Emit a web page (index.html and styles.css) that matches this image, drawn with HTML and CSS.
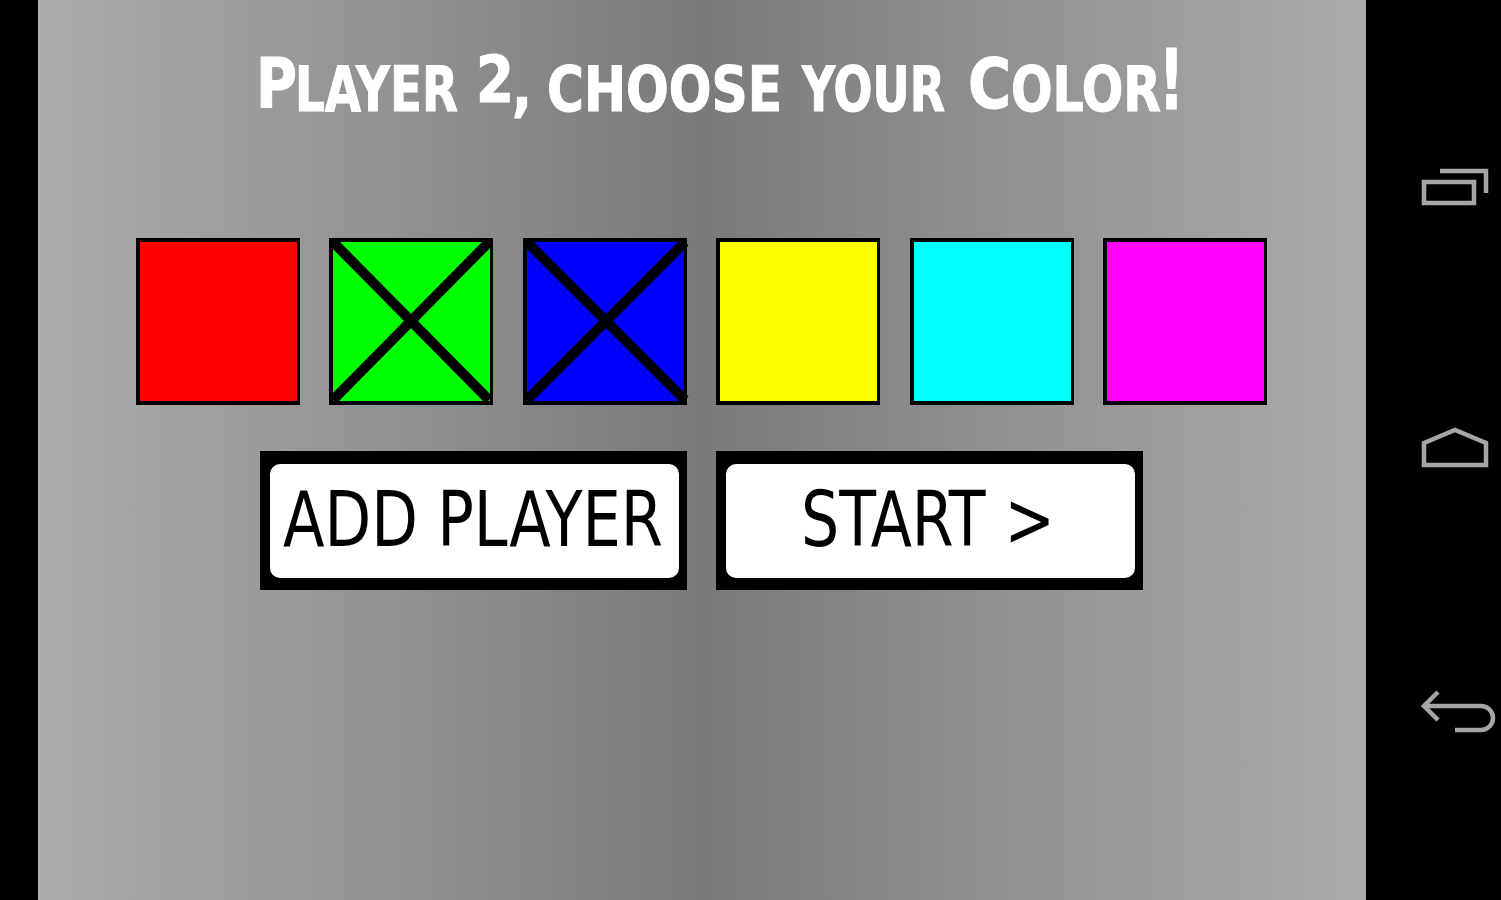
FILE: index.html
```
<!DOCTYPE html>
<html lang="en">
<head>
    <meta charset="UTF-8">
    <meta name="viewport" content="width=device-width, initial-scale=1.0">
    <title>Choose your Color</title>
    <link rel="stylesheet" href="styles.css">
</head>
<body>
    <main class="game">
        <h1 class="title">
            <svg width="920" height="90" viewBox="260 40 920 90">
                <text class="cap" x="256" y="108" textLength="41" lengthAdjust="spacingAndGlyphs">P</text>
                <text class="small" x="295" y="111" textLength="163" lengthAdjust="spacingAndGlyphs">LAYER</text>
                <text class="digit" x="476" y="102" textLength="38" lengthAdjust="spacingAndGlyphs">2</text>
                <text class="small" x="512" y="109" textLength="20" lengthAdjust="spacingAndGlyphs">,</text>
                <text class="small" x="547" y="111" textLength="235" lengthAdjust="spacingAndGlyphs">CHOOSE</text>
                <text class="small" x="802" y="111" textLength="143" lengthAdjust="spacingAndGlyphs">YOUR</text>
                <text class="cap" x="968" y="108" textLength="43" lengthAdjust="spacingAndGlyphs">C</text>
                <text class="small" x="1011" y="111" textLength="150" lengthAdjust="spacingAndGlyphs">OLOR</text>
                <text class="bang" x="1159" y="109" textLength="25" lengthAdjust="spacingAndGlyphs">!</text>
            </svg>
        </h1>

        <div class="colors">
            <div class="color red"></div>
            <div class="color green">
                <svg class="cross" viewBox="0 0 164 166"><path d="M4 4L160 162M160 4L4 162"/></svg>
            </div>
            <div class="color blue">
                <svg class="cross" viewBox="0 0 164 166"><path d="M4 4L162 162M162 4L4 162"/></svg>
            </div>
            <div class="color yellow"></div>
            <div class="color cyan"></div>
            <div class="color magenta"></div>
        </div>

        <div class="actions">
            <button class="action">
                <svg width="409" height="114" viewBox="0 0 409 114">
                    <text x="13" y="82" textLength="380" lengthAdjust="spacingAndGlyphs">ADD PLAYER</text>
                </svg>
            </button>
            <button class="action">
                <svg width="409" height="114" viewBox="0 0 409 114">
                    <text x="75" y="82" textLength="254" lengthAdjust="spacingAndGlyphs">START &gt;</text>
                </svg>
            </button>
        </div>
    </main>

    <nav class="navbar">
        <svg class="nav-icon" viewBox="0 0 80 60">
            <path d="M20 11H66V33M4 22H54V43H4Z"/>
        </svg>
        <svg class="nav-icon" viewBox="0 0 80 60">
            <path d="M4 21L35 8L66 21V43H4Z"/>
        </svg>
        <svg class="nav-icon" viewBox="0 0 80 60">
            <path d="M18 8L4 22L18 36M4 22H61A12 12 0 0 1 61 46H35"/>
        </svg>
    </nav>
</body>
</html>
```
FILE: styles.css
```
body {
    margin: 0;
    height: 900px;
    display: flex;
    background: #000;
    overflow: hidden;
}
.game {
    box-sizing: border-box;
    width: 1328px;
    height: 900px;
    margin-left: 38px;
    padding-top: 40px;
    border-left: 2px solid #b4b4b4;
    background: linear-gradient(to right, #acacac, #7a7a7a 50%, #acacac);
}
.title {
    margin: 0 0 0 220px;
    height: 90px;
}
.title svg {
    display: block;
    overflow: visible;
}
.title text {
    font-family: "DejaVu Sans Condensed", "DejaVu Sans", sans-serif;
    font-weight: bold;
    fill: #fff;
    stroke: #fff;
    stroke-width: 1;
}
.title .cap {
    font-size: 70px;
}
.title .small {
    font-size: 62px;
}
.title .digit {
    font-size: 64px;
}
.title .bang {
    font-size: 84px;
}
.colors {
    display: grid;
    grid-template-columns: repeat(6, 164px);
    column-gap: 29.4px;
    margin: 108px 0 0 96px;
}
.color {
    box-sizing: border-box;
    height: 167px;
    border: 4px solid #000;
    border-right-width: 3px;
}
.red {
    background: #f00;
}
.green {
    background: #0f0;
}
.blue {
    background: #00f;
}
.yellow {
    background: #ff0;
}
.cyan {
    background: #0ff;
}
.magenta {
    background: #f0f;
}
.cross {
    display: block;
    width: 164px;
    height: 166px;
    margin: -4px;
    overflow: visible;
}
.cross path {
    stroke: #000;
    stroke-width: 10;
}
.actions {
    display: flex;
    gap: 29px;
    margin: 46px 0 0 220px;
}
.action {
    box-sizing: border-box;
    width: 427px;
    height: 139px;
    padding: 13px 9px 12px 10px;
    border: none;
    background: #000;
}
.action svg {
    display: block;
    border-radius: 10px;
    background: #fff;
}
.action text {
    font-family: "DejaVu Sans Condensed", "DejaVu Sans", sans-serif;
    font-size: 76px;
    fill: #000;
}
.navbar {
    display: flex;
    flex-direction: column;
    gap: 202px;
    padding: 160px 0 0 54px;
}
.nav-icon {
    width: 80px;
    height: 60px;
    fill: none;
    stroke: #a6a6a6;
    stroke-width: 4.5;
}
```
